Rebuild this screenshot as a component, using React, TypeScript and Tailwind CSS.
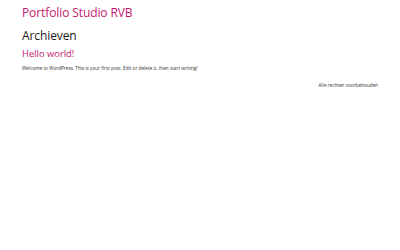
export default function App() {
  return (
    <div className="min-h-[250px] bg-white px-[22px] pt-[5px] text-[#222]" style={{ fontFamily: '"Open Sans", "Noto Sans", sans-serif' }}>
      <header>
        <h1 className="text-[12px] leading-[16px] tracking-[-0.1px] text-[#c2196f]">Portfolio Studio RVB</h1>
      </header>
      <main>
        <h2 className="mt-[6.6px] text-[12px] leading-[16px] tracking-[-0.1px] text-[#1a1a1a]">Archieven</h2>
        <article className="mt-[4.4px]">
          <h3 className="text-[9.4px] leading-[12px] text-[#c2196f]">Hello world!</h3>
          <p className="mt-[5.5px] text-[4.7px] leading-[6px] text-[#333]">
            Welcome to WordPress. This is your first post. Edit or delete it, then start writing!
          </p>
        </article>
      </main>
      <footer className="mt-[11px] flex justify-end">
        <span className="text-[4.7px] leading-[6px] text-[#333]">Alle rechten voorbehouden</span>
      </footer>
    </div>
  );
}
